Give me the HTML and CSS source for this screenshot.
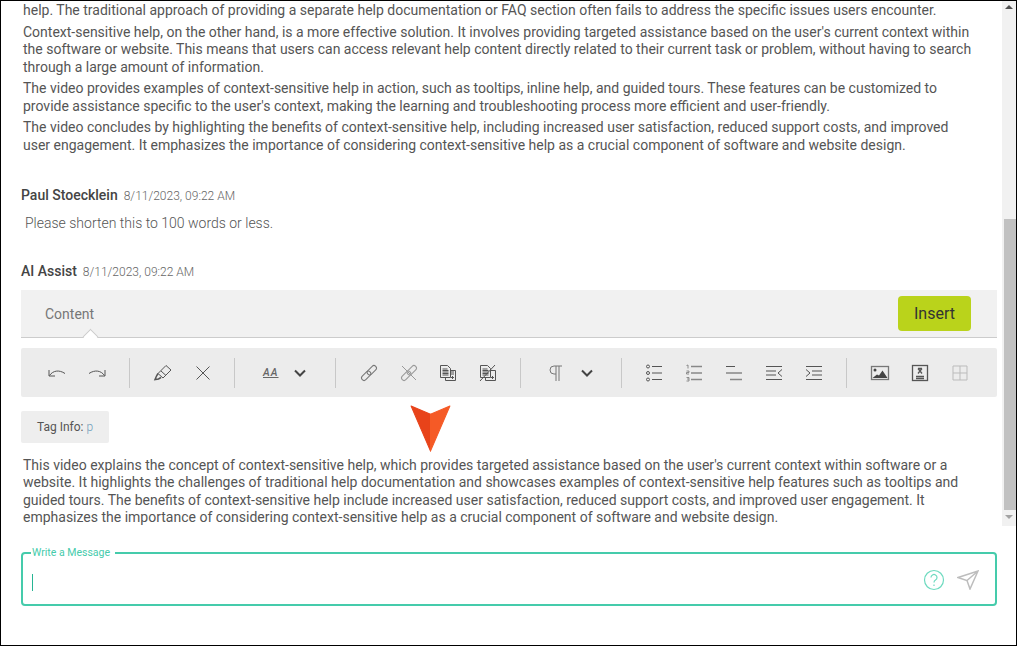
FILE: index.html
```html
<!DOCTYPE html>
<html lang="en">
<head>
<meta charset="utf-8">
<title>AI Assist</title>
<link rel="stylesheet" href="styles.css">
</head>
<body>
<div class="app">
  <div class="scroll-wrap">
    <main class="thread">
      <div class="reply reply-long">
        <p>help. The traditional approach of providing a separate help documentation or FAQ section often fails to address the specific issues users encounter.</p>
        <p>Context-sensitive help, on the other hand, is a more effective solution. It involves providing targeted assistance based on the user's current context within the software or website. This means that users can access relevant help content directly related to their current task or problem, without having to search through a large amount of information.</p>
        <p>The video provides examples of context-sensitive help in action, such as tooltips, inline help, and guided tours. These features can be customized to provide assistance specific to the user's context, making the learning and troubleshooting process more efficient and user-friendly.</p>
        <p>The video concludes by highlighting the benefits of context-sensitive help, including increased user satisfaction, reduced support costs, and improved user engagement. It emphasizes the importance of considering context-sensitive help as a crucial component of software and website design.</p>
      </div>
      <div class="meta meta-user"><span class="name">Paul Stoecklein</span><span class="date">8/11/2023, 09:22 AM</span></div>
      <div class="user-msg">Please shorten this to 100 words or less.</div>
      <div class="meta meta-ai"><span class="name">AI Assist</span><span class="date">8/11/2023, 09:22 AM</span></div>
      <div class="tabbar">
        <span class="tab">Content</span>
        <button class="insert">Insert</button>
      </div>
      <div class="toolbar">
        <div class="group g1">
          <svg class="ic" viewBox="0 0 20 20"><path d="M2 7v6h6M2.500 12.500C6 7.500 12 6.500 18 10.500"/></svg>
          <svg class="ic" viewBox="0 0 20 20"><path d="M18 7v6h-6M17.500 12.500C14 7.500 8 6.500 2 10.500"/></svg>
        </div>
        <div class="group g2">
          <svg class="ic" viewBox="0 0 20 20"><path d="M13 2.500l5 4.500-8 8-5-4.500zM8 8l5 4.500"/><path class="mid" d="M5 10.500l-1.500 2.500-1.500 3.500 3.500-.500 2.500-1.500"/></svg>
          <svg class="ic" viewBox="0 0 20 20"><path d="M3.500 3.500l13 13M16.500 3.500l-13 13"/></svg>
        </div>
        <div class="group g3">
          <span class="aa">AA</span>
          <svg class="chev" viewBox="0 0 12 8"><path d="M1 1.500l5 5 5-5"/></svg>
        </div>
        <div class="group g4">
          <svg class="ic muted" viewBox="0 0 20 20"><g transform="rotate(-45 10 10)"><rect x="0.500" y="7.500" width="11" height="5" rx="2.500"/><rect x="8.500" y="7.500" width="11" height="5" rx="2.500"/></g></svg>
          <svg class="ic faded" viewBox="0 0 20 20"><g transform="rotate(-45 10 10)"><rect x="0.500" y="7.500" width="11" height="5" rx="2.500"/><rect x="8.500" y="7.500" width="11" height="5" rx="2.500"/></g><path d="M3 3l14 14"/></svg>
          <svg class="ic" viewBox="0 0 20 20"><path d="M1.500 2.500h7l3 3v9h-10zM3.500 6h5M3.500 7.500h6M3.500 9h6M3.500 10.500h6M3.500 12h6"/><path d="M11.500 7.500h5v10h-10v-3M11 9h4M11 11h4"/><path d="M12 14.500h3M13.500 13v3"/></svg>
          <svg class="ic" viewBox="0 0 20 20"><path d="M1.500 2.500h7l3 3v9h-10zM3.500 6h5M3.500 7.500h6M3.500 9h6M3.500 10.500h6M3.500 12h6"/><path d="M11.500 7.500h5v10h-10v-3"/><path d="M12 14.500h3M13.500 13v3M1 18L16 2"/></svg>
        </div>
        <div class="group g5">
          <svg class="ic muted" viewBox="0 0 20 20"><path d="M18 3H10a4 4 0 0 0 0 8h2M12 3v15M15 3v15"/></svg>
          <svg class="chev" viewBox="0 0 12 8"><path d="M1 1.500l5 5 5-5"/></svg>
        </div>
        <div class="group g6">
          <svg class="ic" viewBox="0 0 20 20"><circle cx="4" cy="3.500" r="1.500"/><circle cx="4" cy="10" r="1.500"/><circle cx="4" cy="16.500" r="1.500"/><path d="M8 3.500h10M8 10h10M8 16.500h10"/></svg>
          <svg class="ic" viewBox="0 0 20 20"><path class="thick" d="M7 3.500h11M7 10h11M7 16.500h11"/><path class="fine" d="M2.500 2.500l1.500-.5v3.500M2.500 8h2.500v1.500H2.500v1.500h2.500M2.500 14.500h2.500v3.500H2.500M3 16h2"/></svg>
          <svg class="ic" viewBox="0 0 20 20"><path d="M2 3.500h9M2 10h16"/><path class="thick" d="M6 16.500h12"/></svg>
          <svg class="ic" viewBox="0 0 20 20"><path d="M2 3.500h16M2 8h10M2 12h10M2 16.500h16M18 6.500L14 10l4 3.500"/></svg>
          <svg class="ic" viewBox="0 0 20 20"><path d="M2 3.500h16M8 8h10M8 12h10M2 16.500h16M2 6.500L6 10l-4 3.500"/></svg>
        </div>
        <div class="group g7">
          <svg class="ic muted heavy" viewBox="0 0 20 20"><rect x="1.500" y="3.500" width="17" height="13"/><circle cx="5" cy="7" r="1.500" class="solid"/><path class="solid" d="M2.500 15l4.500-3.500 2 1 3.500-5 5 7.500z"/></svg>
          <svg class="ic heavy" viewBox="0 0 20 20"><rect x="2.500" y="2.500" width="15" height="15"/><path d="M6 13.500h8M6 15.500h8M8 5.500l4 5M12 5.500l-4 5M8 5.500h4"/></svg>
          <svg class="ic faint" viewBox="0 0 20 20"><path d="M3 3h14v14H3zM10 3v14M3 10h14"/></svg>
        </div>
      </div>
      <div class="tag">Tag Info: <span class="tag-val">p</span></div>
      <div class="reply reply-short">
        <p>This video explains the concept of context-sensitive help, which provides targeted assistance based on the user's current context within software or a website. It highlights the challenges of traditional help documentation and showcases examples of context-sensitive help features such as tooltips and guided tours. The benefits of context-sensitive help include increased user satisfaction, reduced support costs, and improved user engagement. It emphasizes the importance of considering context-sensitive help as a crucial component of software and website design.</p>
      </div>
    </main>
    <div class="scrollbar">
      <span class="arrow up"></span>
      <span class="track"><span class="thumb"></span></span>
      <span class="arrow down"></span>
    </div>
    <svg class="pointer" viewBox="0 0 40 46"><path fill="#e8431a" stroke="#e8431a" stroke-linejoin="round" d="M20 9L1 1l19 44z"/><path fill="#f55a26" stroke="#f55a26" stroke-linejoin="round" d="M20 9L39 1 20 45z"/></svg>
  </div>
  <div class="composer">
    <fieldset class="field">
      <legend class="legend">Write a Message</legend>
      <span class="caret"></span>
      <svg class="help" viewBox="0 0 22 22"><circle cx="11" cy="11" r="9.500"/><path d="M8 8.500a3 3 0 1 1 4.500 2.600c-1 .6-1.500 1.200-1.500 2.400M11 15.500v1.500"/></svg>
      <svg class="send" viewBox="0 0 22 20"><path d="M1 7.500L21 1l-8 18-3-8.500zM10 10.500L21 1"/></svg>
    </fieldset>
  </div>
</div>
</body>
</html>
```
FILE: styles.css
```css
* { box-sizing: border-box; }
html, body { margin: 0; height: 100%; }
body { font-family: Roboto, "Liberation Sans", sans-serif; color: #555; background: #fff; overflow: hidden; }
.app { width: 1017px; height: 646px; border: 1px solid #000; display: flex; flex-direction: column; }
.scroll-wrap { position: relative; height: 525px; display: flex; overflow: hidden; flex: none; }
.thread { flex: 1; min-width: 0; padding: 0 5px 0 20px; overflow: hidden; }
.reply { font-size: 14px; line-height: 17.5px; padding-left: 2px; padding-right: 25px; }
.reply p { margin: 0 0 4px; }
.reply-long { padding-top: 1px; }
.meta { display: flex; align-items: baseline; gap: 6px; }
.meta-user { margin-top: 33px; }
.name { font-size: 14px; font-weight: 500; color: #444; }
.date { font-size: 12px; font-weight: 300; color: #666; }
.user-msg { margin-top: 11px; padding-left: 4px; font-size: 14px; font-weight: 300; line-height: 18px; color: #555; }
.meta-ai { margin-top: 31px; }
.tabbar { margin-top: 11px; height: 48px; background: #f1f1f1; border-bottom: 1px solid #ccc; display: flex; align-items: center; justify-content: space-between; padding: 0 26px 0 24px; position: relative; }
.tabbar::after { content: ""; position: absolute; left: 64px; bottom: -5px; width: 10px; height: 10px; background: #fff; border-left: 1px solid #ccc; border-top: 1px solid #ccc; transform: rotate(45deg); }
.tab { font-size: 14px; color: #777; }
.insert { width: 73px; height: 35px; border: 0; border-radius: 4px; background: #bad31b; color: #333; font: 400 16px Roboto, sans-serif; padding: 0; }
.toolbar { margin-top: 10px; height: 49px; background: #ececec; border-radius: 2px; display: flex; align-items: center; }
.group { height: 30px; display: flex; align-items: center; gap: 20px; border-right: 1px solid #c8c8c8; }
.g1 { width: 109px; padding-left: 26px; }
.g2 { width: 105px; padding-left: 23px; }
.g3 { width: 101px; padding-left: 28px; gap: 14px; }
.g4 { width: 185px; padding-left: 23px; }
.g5 { width: 101px; padding-left: 23px; gap: 17px; }
.g6 { width: 225px; padding-left: 22px; }
.g7 { border-right: 0; padding-left: 23px; }
.ic { width: 20px; height: 20px; flex: none; fill: none; stroke: #555; stroke-width: 1; }
.ic.muted { stroke: #777; }
.ic.faded { stroke: #999; }
.ic.faint { stroke: #bbb; }
.ic.heavy { stroke-width: 1.300; }
.ic .solid { fill: #444; stroke: none; }
.ic .thick { stroke-width: 1.500; stroke: #888; }
.ic .fine { stroke-width: .8; stroke: #777; }
.ic .mid { stroke-width: 1.500; }
.chev { width: 12px; height: 8px; flex: none; fill: none; stroke: #444; stroke-width: 2; }
.aa { width: 17px; font-size: 10.500px; font-weight: 500; font-style: italic; color: #666; text-decoration: underline; letter-spacing: 1px; }
.tag { margin-top: 14px; width: 88px; height: 32px; background: #eee; border-radius: 2px; font-size: 12px; line-height: 32px; text-align: center; color: #555; }
.tag-val { color: #6f9cba; font-weight: 300; }
.reply-short { margin-top: 13.500px; }
.scrollbar { width: 14px; flex: none; background: #f1f1f1; display: flex; flex-direction: column; align-items: center; }
.arrow { height: 14px; flex: none; width: 14px; position: relative; }
.arrow.down { height: 16px; }
.arrow::before { content: ""; position: absolute; left: 3px; border-left: 4px solid transparent; border-right: 4px solid transparent; }
.arrow.up::before { top: 4px; border-bottom: 4px solid #505050; }
.arrow.down::before { top: 5px; border-top: 4px solid #a3a3a3; }
.track { flex: 1; width: 100%; display: flex; flex-direction: column; justify-content: flex-end; }
.thumb { height: 291px; margin-left: 2px; background: #c1c1c1; }
.pointer { position: absolute; left: 409px; top: 404px; width: 41px; height: 47px; }
.composer { flex: 1; padding: 0 19px 0 20px; }
.field { position: relative; margin: 21px 0 0; padding: 0 0 0 8px; height: 59px; border: 2px solid #45cbab; border-radius: 4px; min-width: 0; }
.legend { padding: 0 5px 0 1px; margin: 0; font-size: 10.500px; line-height: 12px; color: #45cbab; }
.caret { position: absolute; left: 9px; top: 15px; width: 1px; height: 17px; background: #27b594; }
.help { position: absolute; right: 50px; top: 10px; width: 22px; height: 22px; fill: none; stroke: #6ddabf; stroke-width: 1.200; }
.send { position: absolute; right: 16px; top: 11px; width: 22px; height: 20px; fill: none; stroke: #bdbdbd; stroke-width: 1.500; }
```
